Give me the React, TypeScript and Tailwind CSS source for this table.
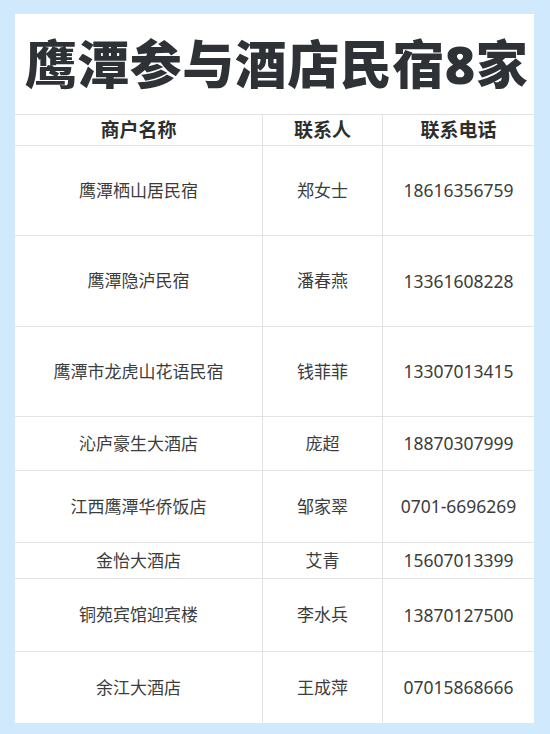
import React from "react";

interface Row {
    name: string;
    contact: string;
    phone: string;
    h: string;
}

const rows: Row[] = [
    { name: "鹰潭栖山居民宿", contact: "郑女士", phone: "18616356759", h: "h-[90px]" },
    { name: "鹰潭隐泸民宿", contact: "潘春燕", phone: "13361608228", h: "h-[91px]" },
    { name: "鹰潭市龙虎山花语民宿", contact: "钱菲菲", phone: "13307013415", h: "h-[90px]" },
    { name: "沁庐豪生大酒店", contact: "庞超", phone: "18870307999", h: "h-[54px]" },
    { name: "江西鹰潭华侨饭店", contact: "邹家翠", phone: "0701-6696269", h: "h-[72px]" },
    { name: "金怡大酒店", contact: "艾青", phone: "15607013399", h: "h-[36px]" },
    { name: "铜苑宾馆迎宾楼", contact: "李水兵", phone: "13870127500", h: "h-[73px]" },
    { name: "余江大酒店", contact: "王成萍", phone: "07015868666", h: "h-[71px]" },
];

export default function App() {
    return (
        <div
            className="min-h-[734px] w-[550px] bg-[#d0e9fc] pt-[14px] pl-[15px]"
            style={{ fontFamily: '"Noto Sans", "Noto Sans CJK SC", sans-serif' }}
        >
            <div className="w-[519px] h-[709px] bg-white flex flex-col">
                {/* Title */}
                <div className="h-[101px] flex items-center justify-center">
                    <h1 className="text-[52px] leading-none font-black text-[#2e3135] tracking-[0.5px] pl-[4px]">
                        鹰潭参与酒店民宿8家
                    </h1>
                </div>

                {/* Table */}
                <div className="grid grid-cols-[248px_120px_151px] border-t border-[#e3e3e3] text-[#3c3c3c]">
                    {["商户名称", "联系人", "联系电话"].map((label, i) => (
                        <div
                            key={label}
                            className={`h-[31px] flex items-center justify-center border-b border-[#e3e3e3] text-[19px] font-bold text-[#2e2e2e] ${i < 2 ? "border-r" : ""}`}
                        >
                            {label}
                        </div>
                    ))}

                    {rows.map((row, index) => {
                        const last = index === rows.length - 1;
                        const line = last ? "" : "border-b";
                        return (
                            <React.Fragment key={row.name}>
                                <div className={`${row.h} ${line} border-r border-[#e3e3e3] flex items-center justify-center text-[17px]`}>
                                    {row.name}
                                </div>
                                <div className={`${row.h} ${line} border-r border-[#e3e3e3] flex items-center justify-center text-[17px]`}>
                                    {row.contact}
                                </div>
                                <div className={`${row.h} ${line} border-[#e3e3e3] flex items-center justify-center text-[17.5px]`}>
                                    {row.phone}
                                </div>
                            </React.Fragment>
                        );
                    })}
                </div>
            </div>
        </div>
    );
}
